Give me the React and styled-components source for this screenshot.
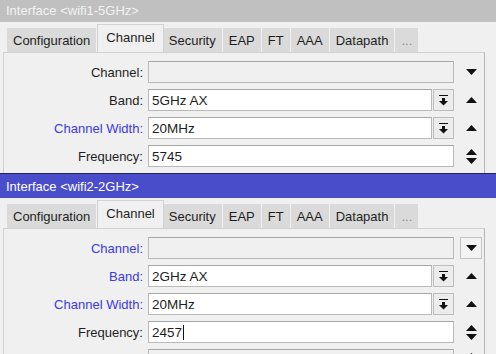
import React from 'react'
import styled, { createGlobalStyle } from 'styled-components'

const GlobalStyle = createGlobalStyle`
    html, body {
        margin: 0;
        padding: 0;
        background: #f0f0f0;
        overflow: hidden;
    }
    body {
        font-family: "Liberation Sans", Arial, sans-serif;
        font-size: 13px;
        color: #1e1e1e;
    }
`

const Window = styled.div`
    display: flex;
    flex-direction: column;
    height: ${p => p.$height};
    margin-top: ${p => p.$offset}px;
    border-top: ${p => (p.$active ? '1px solid #24244c' : 'none')};
    overflow: hidden;
`

const TitleBar = styled.div`
    flex-shrink: 0;
    height: 24px;
    display: flex;
    align-items: center;
    padding-left: 6px;
    background: ${p => (p.$active ? '#4a4dc9' : '#c0c0c0')};
    color: ${p => (p.$active ? '#ffffff' : '#f2f2f2')};
`

const TabStrip = styled.div`
    flex-shrink: 0;
    height: 30px;
    display: flex;
    align-items: flex-end;
    padding-left: 7px;
`

const Tab = styled.div`
    box-sizing: border-box;
    display: flex;
    align-items: center;
    height: ${p => (p.$selected ? '28px' : '24px')};
    padding: ${p => (p.$selected ? '0 8px 3px' : '0 6px')};
    margin: ${p => (p.$selected ? '0 -1px 0 0' : '0 1px 0 0')};
    background: ${p => (p.$selected ? '#f0f0f0' : '#dadada')};
    border: ${p => (p.$selected ? '1px solid #d2d2d2' : 'none')};
    border-bottom: none;
    color: ${p => (p.$muted ? '#8a8a8a' : '#1e1e1e')};
    position: relative;
    z-index: ${p => (p.$selected ? 1 : 0)};
    white-space: nowrap;
`

const Panel = styled.div`
    flex: 1;
    margin: 0 11px 0 3px;
    border: 1px solid #d2d2d2;
    border-right-color: #b4b4b4;
    border-bottom: none;
    padding-top: 8px;
    overflow: hidden;
`

const Form = styled.div`
    display: grid;
    grid-template-columns: 139px 306px 30px;
    grid-auto-rows: 22px;
    column-gap: 5px;
    row-gap: 6px;
`

const Label = styled.div`
    align-self: center;
    text-align: right;
    color: ${p => (p.$link ? '#3a3ae6' : '#1e1e1e')};
    white-space: nowrap;
`

const FieldGroup = styled.div`
    display: flex;
    gap: 1px;
`

const Field = styled.div`
    box-sizing: border-box;
    flex: 1;
    height: 22px;
    display: flex;
    align-items: center;
    padding: 0 3px;
    font-size: 13.5px;
    background: ${p => (p.$disabled ? '#f0f0f0' : '#ffffff')};
    border: 1px solid #b9b9b9;
    border-top-color: #a6a6a6;
`

const Caret = styled.span`
    display: inline-block;
    width: 1px;
    height: 15px;
    margin-left: 1px;
    background: #111;
`

const DropButton = styled.div`
    box-sizing: border-box;
    width: 21px;
    height: 22px;
    display: flex;
    align-items: center;
    justify-content: center;
    background: #ececec;
    border: 1px solid #bdbdbd;
`

const Trail = styled.div`
    padding-left: 1px;
    display: flex;
`

const IconBox = styled.div`
    box-sizing: border-box;
    width: 22px;
    height: 22px;
    display: flex;
    align-items: center;
    justify-content: center;
    border: 1px solid ${p => (p.$bordered ? '#c4c4c4' : 'transparent')};
    background: ${p => (p.$bordered ? '#f3f3f3' : 'transparent')};
`

const Down = () => (
    <svg width="11" height="6" viewBox="0 0 11 6">
        <path d="M0 0H11L5.5 6Z" fill="#111" />
    </svg>
)

const Up = () => (
    <svg width="11" height="6" viewBox="0 0 11 6">
        <path d="M0 6H11L5.5 0Z" fill="#111" />
    </svg>
)

const Spin = () => (
    <svg width="11" height="15" viewBox="0 0 11 15">
        <path d="M0 6H11L5.5 0Z" fill="#111" />
        <path d="M0 9H11L5.5 15Z" fill="#111" />
    </svg>
)

const DropIcon = () => (
    <svg width="9" height="11" viewBox="0 0 9 11">
        <rect x="0" y="0" width="9" height="1" fill="#111" />
        <rect x="3" y="3" width="3" height="3" fill="#111" />
        <path d="M0 6H9L4.5 10.5Z" fill="#111" />
    </svg>
)

const tabs = ['Configuration', 'Channel', 'Security', 'EAP', 'FT', 'AAA', 'Datapath', '...']

const InterfaceWindow = ({ title, active, band, freq, editing, offset, height }) => (
    <Window $active={active} $offset={offset} $height={height}>
        <TitleBar $active={active}>{title}</TitleBar>
        <TabStrip>
            {tabs.map(t => (
                <Tab key={t} $selected={t === 'Channel'} $muted={t === '...'}>{t}</Tab>
            ))}
        </TabStrip>
        <Panel>
            <Form>
                <Label $link={active}>Channel:</Label>
                <Field $disabled />
                <Trail><IconBox $bordered={active}><Down /></IconBox></Trail>

                <Label $link={active}>Band:</Label>
                <FieldGroup>
                    <Field>{band}</Field>
                    <DropButton><DropIcon /></DropButton>
                </FieldGroup>
                <Trail><IconBox><Up /></IconBox></Trail>

                <Label $link>Channel Width:</Label>
                <FieldGroup>
                    <Field>20MHz</Field>
                    <DropButton><DropIcon /></DropButton>
                </FieldGroup>
                <Trail><IconBox><Up /></IconBox></Trail>

                <Label>Frequency:</Label>
                <Field>{freq}{editing && <Caret />}</Field>
                <Trail><IconBox><Spin /></IconBox></Trail>

                <Label />
                <Field $disabled />
                <Trail><IconBox><Spin /></IconBox></Trail>
            </Form>
        </Panel>
    </Window>
)

export default function App () {
    return (
        <>
            <GlobalStyle />
            <InterfaceWindow
                title="Interface <wifi1-5GHz>"
                band="5GHz AX"
                freq="5745"
                offset={-2}
                height="175px"
            />
            <InterfaceWindow
                title="Interface <wifi2-2GHz>"
                band="2GHz AX"
                freq="2457"
                active
                editing
                offset={0}
                height="auto"
            />
        </>
    )
}
